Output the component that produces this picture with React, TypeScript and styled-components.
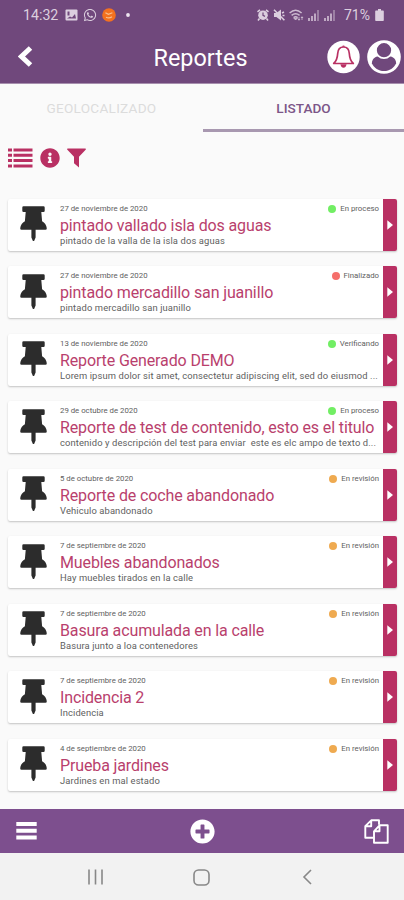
import React from "react";
import styled, { createGlobalStyle } from "styled-components";
import { FaInfoCircle, FaPlusCircle, FaWhatsapp } from "react-icons/fa";

const Global = createGlobalStyle`
  * { box-sizing: border-box; }
  body { margin: 0; background: #fafafa; font-family: Roboto, sans-serif; }
  svg { display: block; flex: none; }
`;

const Screen = styled.div`
  width: 404px;
  height: 900px;
  display: flex;
  flex-direction: column;
  overflow: hidden;
  background: #fafafa;
`;

const Header = styled.header`
  height: 84px;
  flex: none;
  background: #70487c;
  border-bottom: 1px solid #a78fae;
  color: #fff;
`;

const StatusBar = styled.div`
  height: 30px;
  display: flex;
  align-items: center;
  justify-content: space-between;
  padding: 0 20px 0 23px;
  font-size: 13px;
  color: #dccfdf;
`;

const StatusGroup = styled.div<{ $gap: number }>`
  display: flex;
  align-items: center;
  gap: ${(p) => p.$gap}px;
`;

const Clock = styled.span`
  width: 36px;
  font-size: 14.2px;
  margin-right: 1px;
`;

const Percent = styled.span`
  font-size: 14px;
  margin-left: 4px;
  width: 27px;
`;

const TitleBar = styled.div`
  height: 53px;
  display: grid;
  grid-template-columns: 80px 1fr 80px;
  align-items: center;
  padding: 0 3px 0 18px;
`;

const Title = styled.h1`
  margin: 0;
  padding-top: 3px;
  padding-right: 18px;
  text-align: center;
  font-size: 23.4px;
  line-height: 28px;
  font-weight: 400;
  white-space: nowrap;
`;

const Actions = styled.div`
  display: flex;
  justify-content: flex-end;
  gap: 7px;
`;

const Tabs = styled.nav`
  height: 48px;
  flex: none;
  display: grid;
  grid-template-columns: 203px 201px;
`;

const Tab = styled.div<{ $active?: boolean }>`
  display: flex;
  align-items: center;
  justify-content: center;
  font-size: 13.6px;
  font-weight: ${(p) => (p.$active ? 500 : 400)};
  letter-spacing: ${(p) => (p.$active ? 0 : 0.25)}px;
  color: ${(p) => (p.$active ? "#7c5688" : "#dcdcdc")};
  border-bottom: 3px solid ${(p) => (p.$active ? "#a898b0" : "transparent")};
  padding-top: 3px;
`;

const Tools = styled.div`
  height: 66px;
  flex: none;
  display: flex;
  gap: 7px;
  padding: 16px 0 0 8px;
  color: #b93063;
`;

const List = styled.main`
  flex: 1;
  display: flex;
  flex-direction: column;
  gap: 15.5px;
  padding: 0.5px 7px 0 8px;
`;

const Card = styled.article`
  height: 52px;
  flex: none;
  display: grid;
  grid-template-columns: 52px 1fr 14px;
  background: #fff;
  border-radius: 2px;
  box-shadow: 0 1px 2px rgba(0, 0, 0, 0.22);
`;

const PinCell = styled.div`
  padding: 7.5px 0 0 12px;
  color: #2c2c2c;
`;

const CardBody = styled.div`
  min-width: 0;
  padding: 4px 4px 0 0;
  color: #606060;
`;

const Meta = styled.div`
  display: flex;
  justify-content: space-between;
  height: 12px;
  line-height: 12px;
  font-size: 7.8px;
  white-space: nowrap;
`;

const Status = styled.span`
  display: flex;
  align-items: center;
  gap: 4px;
`;

const Dot = styled.i<{ $color: string }>`
  width: 8px;
  height: 8px;
  border-radius: 50%;
  background: ${(p) => p.$color};
`;

const Name = styled.h2`
  margin: 0;
  height: 21px;
  line-height: 22px;
  font-size: 16px;
  letter-spacing: -0.13px;
  font-weight: 400;
  white-space: nowrap;
  color: #b93f6d;
`;

const Description = styled.p`
  margin: 0;
  height: 11px;
  line-height: 9px;
  font-size: 9.4px;
  letter-spacing: 0.12px;
  white-space: pre;
`;

const Open = styled.button`
  display: flex;
  align-items: center;
  justify-content: center;
  border: 0;
  padding: 0;
  background: #b93063;
  border-radius: 0 2px 2px 0;
`;

const BottomBar = styled.footer`
  height: 44px;
  flex: none;
  display: grid;
  grid-template-columns: 174px 25px 174px;
  align-items: center;
  padding: 0 15px 0 16px;
  background: #7d4f8e;
  color: #fff;

  & > :last-child {
    justify-self: end;
  }
`;

const SystemNav = styled.div`
  height: 47px;
  flex: none;
  display: flex;
  align-items: center;
  gap: 89px;
  padding: 1px 0 0 87px;
  background: #f2f2f2;

  & > :last-child {
    margin-left: 3px;
  }
`;

const green = "#72ee64";
const red = "#f56f6b";
const orange = "#efaa50";

type Report = {
  date: string;
  name: string;
  text: string;
  status: string;
  color: string;
};

const reports: Report[] = [
  { date: "27 de noviembre de 2020", name: "pintado vallado isla dos aguas", text: "pintado de la valla de la isla dos aguas", status: "En proceso", color: green },
  { date: "27 de noviembre de 2020", name: "pintado mercadillo san juanillo", text: "pintado mercadillo san juanillo", status: "Finalizado", color: red },
  { date: "13 de noviembre de 2020", name: "Reporte Generado DEMO", text: "Lorem ipsum dolor sit amet, consectetur adipiscing elit, sed do eiusmod ...", status: "Verificando", color: green },
  { date: "29 de octubre de 2020", name: "Reporte de test de contenido, esto es el titulo", text: "contenido y descripción del test para enviar  este es elc ampo de texto d...", status: "En proceso", color: green },
  { date: "5 de octubre de 2020", name: "Reporte de coche abandonado", text: "Vehiculo abandonado", status: "En revisión", color: orange },
  { date: "7 de septiembre de 2020", name: "Muebles abandonados", text: "Hay muebles tirados en la calle", status: "En revisión", color: orange },
  { date: "7 de septiembre de 2020", name: "Basura acumulada en la calle", text: "Basura junto a loa contenedores", status: "En revisión", color: orange },
  { date: "7 de septiembre de 2020", name: "Incidencia 2", text: "Incidencia", status: "En revisión", color: orange },
  { date: "4 de septiembre de 2020", name: "Prueba jardines", text: "Jardines en mal estado", status: "En revisión", color: orange },
];

const PictureIcon = () => (
  <svg width="13" height="12" viewBox="0 0 13 12">
    <rect x="0.5" y="0.5" width="12" height="11" rx="1" fill="#dccfdf" />
    <path d="M2.5 2.5h2v4h-2zM2 9.5l3-2 2 1 3-3.5 1 4.5z" fill="#70487c" />
  </svg>
);

const OrangeBadge = () => (
  <svg width="14" height="14" viewBox="0 0 14 14">
    <circle cx="7" cy="7" r="6.8" fill="#f4711f" />
    <path d="M3.4 4.8l3 1.6 4-1.6M4 9.2q3 1.6 6-.4" stroke="#f9bd8d" strokeWidth="1.2" fill="none" />
  </svg>
);

const AlarmIcon = () => (
  <svg width="12" height="12" viewBox="0 0 12 12">
    <path d="M0.5 2.8L3 .8M11.5 2.8L9 .8M2.5 9.5L1 11.5M9.5 9.5l1.5 2" stroke="#dccfdf" strokeWidth="1.6" />
    <circle cx="6" cy="6.2" r="4.8" fill="#dccfdf" />
    <path d="M6 3.4v3l2 1" stroke="#70487c" strokeWidth="1.2" fill="none" />
  </svg>
);

const MuteIcon = () => (
  <svg width="12" height="12" viewBox="0 0 12 12">
    <path d="M1 4h2.4L8 .5v11L3.4 8H1z" fill="#dccfdf" />
    <path d="M1 .8L11.4 11.2M9 4l2-1M9.500 6.500h2" stroke="#dccfdf" strokeWidth="1.6" />
  </svg>
);

const WifiIcon = () => (
  <svg width="15" height="12" viewBox="0 0 15 12">
    <path d="M.6 4q6-5.5 12 0M2.6 6.4q4-3.4 8 0M4.6 8.6q2-1.8 4 0" stroke="#cdbbd1" strokeWidth="1.5" fill="none" />
    <path d="M6.6 11L4.8 9.2h3.6zM10 8v3M9 10l1 1.3L11 10M13 11V8M12 9l1-1.3L14 9" fill="#cdbbd1" stroke="#cdbbd1" strokeWidth=".8" />
  </svg>
);

const SignalIcon = () => (
  <svg width="12" height="12" viewBox="0 0 12 12">
    <path d="M1 9v3M4 7v5M7 4.5V12" stroke="#cdbbd1" strokeWidth="1.7" />
    <path d="M10 1v11" stroke="#a58bac" strokeWidth="1.7" />
  </svg>
);

const BatteryIcon = () => (
  <svg width="9" height="12" viewBox="0 0 9 12">
    <path d="M3 0h3v1.4h2q.8 0 .8.8v9q0 .8-.8.8H1q-.8 0-.8-.8v-9q0-.8.8-.8h2z" fill="#dccfdf" />
  </svg>
);

const BackIcon = () => (
  <svg width="15" height="22" viewBox="0 0 15 22">
    <path d="M12.500 2L3.500 10.500l9 8.500" stroke="#fff" strokeWidth="5" fill="none" />
  </svg>
);

const BellIcon = () => (
  <svg width="33" height="34" viewBox="0 0 33 34">
    <circle cx="16.5" cy="17" r="16.2" fill="#fff" />
    <path
      d="M16.5 7c-4 0-5.6 3-5.8 6.5-.3 5-1 7.3-4 10h19.6c-3-2.700-3.700-5-4-10C22.1 10 20.5 7 16.5 7z"
      fill="none"
      stroke="#b93063"
      strokeWidth="1.7"
      strokeLinejoin="round"
    />
    <path d="M15.2 6.8a1.3 1.3 0 012.600 0zM13.4 24.3h6.200q-.8 3.500-3.100 3.500t-3.100-3.500z" fill="#b93063" />
  </svg>
);

const ProfileIcon = () => (
  <svg width="34" height="34" viewBox="0 0 34 34">
    <circle cx="17" cy="17" r="16.8" fill="#fff" />
    <path d="M11.5 16.300C7.500 17 4.900 19.600 4.900 23.200 7 28 11.500 31 17 31s10-3 12.100-7.800c0-3.600-2.600-6.200-6.600-6.900z" fill="#70487c" />
    <circle cx="17" cy="10.200" r="8" fill="#70487c" stroke="#fff" strokeWidth="1.700" />
  </svg>
);

const PinIcon = () => (
  <svg width="27" height="36" viewBox="0 0 27 36">
    <path
      d="M3.500.3h20q1.200 0 1.200 1.200v3.200q0 1.200-1.200 1.200h-2.200l.8 9.300c2.600 1.300 4.300 3.600 4.700 7.100q0 1.500-1.300 1.500H15.600v7.600l-1.500 3.600h-1.200l-1.500-3.600v-7.600H1.500Q.2 23.800.2 22.300c.4-3.500 2.100-5.800 4.700-7.100l.8-9.300H3.500q-1.200 0-1.200-1.200V1.500Q2.300.3 3.500.3z"
      fill="currentColor"
    />
  </svg>
);

const ListIcon = () => (
  <svg width="25" height="20" viewBox="0 0 25 20">
    <path d="M0 .500h4v3H0zM5.500.500H24.500v3h-19zM0 5.800h4v3H0zM5.500 5.800H24.500v3h-19zM0 11.100h4v3H0zM5.500 11.100H24.500v3h-19zM0 16.400h4v3H0zM5.500 16.400H24.500v3h-19z" fill="currentColor" />
  </svg>
);

const FilterIcon = () => (
  <svg width="19" height="20" viewBox="0 0 19 20">
    <path d="M.6.5h17.800q.9.700 0 1.600L12 8.700v10.800L7 15.300V8.700L.6 2.100Q-.3 1.200.6.500z" fill="currentColor" />
  </svg>
);

const ArrowIcon = () => (
  <svg width="6" height="10" viewBox="0 0 6 10">
    <path d="M.3.300L6 5 .3 9.700z" fill="#fff" />
  </svg>
);

const MenuIcon = () => (
  <svg width="21" height="18" viewBox="0 0 21 18">
    <path d="M.3 2h20.400M.3 8.800h20.400M.3 15.600h20.400" stroke="#fff" strokeWidth="4" />
  </svg>
);

const CopyIcon = () => (
  <svg width="25" height="25" viewBox="0 0 25 25">
    <g fill="none" stroke="#fff" strokeWidth="1.900" strokeLinejoin="round">
      <path d="M15 5.800V1.300H7.200L1.300 7.200v11.500h8M7.200 1.300v5.900H1.300" />
      <path d="M23.700 6.300h-8.200l-5.500 6v11.400h13.700zM15.500 6.300v6H10" />
    </g>
  </svg>
);

const RecentsIcon = () => (
  <svg width="17" height="16" viewBox="0 0 17 16">
    <path d="M2 .5v15M8.500.500v15M15 .5v15" stroke="#888" strokeWidth="1.600" />
  </svg>
);

const HomeIcon = () => (
  <svg width="17" height="17" viewBox="0 0 17 17">
    <rect x="1" y="1" width="15" height="15" rx="4.600" fill="none" stroke="#888" strokeWidth="1.600" />
  </svg>
);

const NavBackIcon = () => (
  <svg width="10" height="16" viewBox="0 0 10 16">
    <path d="M9 1L2 8l7 7" fill="none" stroke="#888" strokeWidth="1.600" />
  </svg>
);

const ReportCard = ({ report }: { report: Report }) => (
  <Card>
    <PinCell>
      <PinIcon />
    </PinCell>
    <CardBody>
      <Meta>
        <span>{report.date}</span>
        <Status>
          <Dot $color={report.color} />
          {report.status}
        </Status>
      </Meta>
      <Name>{report.name}</Name>
      <Description>{report.text}</Description>
    </CardBody>
    <Open aria-label="Abrir">
      <ArrowIcon />
    </Open>
  </Card>
);

export default function App() {
  return (
    <>
      <Global />
      <Screen>
        <Header>
          <StatusBar>
            <StatusGroup $gap={5}>
              <Clock>14:32</Clock>
              <PictureIcon />
              <FaWhatsapp size={14} />
              <OrangeBadge />
              <svg width="14" height="4" viewBox="0 0 14 4">
                <circle cx="7" cy="2" r="1.900" fill="#eee5f0" />
              </svg>
            </StatusGroup>
            <StatusGroup $gap={4}>
              <AlarmIcon />
              <MuteIcon />
              <WifiIcon />
              <SignalIcon />
              <SignalIcon />
              <Percent>71%</Percent>
              <BatteryIcon />
            </StatusGroup>
          </StatusBar>
          <TitleBar>
            <BackIcon />
            <Title>Reportes</Title>
            <Actions>
              <BellIcon />
              <ProfileIcon />
            </Actions>
          </TitleBar>
        </Header>
        <Tabs>
          <Tab>GEOLOCALIZADO</Tab>
          <Tab $active>LISTADO</Tab>
        </Tabs>
        <Tools>
          <ListIcon />
          <FaInfoCircle size={20} />
          <FilterIcon />
        </Tools>
        <List>
          {reports.map((r) => (
            <ReportCard key={r.name} report={r} />
          ))}
        </List>
        <BottomBar>
          <MenuIcon />
          <FaPlusCircle size={25} />
          <CopyIcon />
        </BottomBar>
        <SystemNav>
          <RecentsIcon />
          <HomeIcon />
          <NavBackIcon />
        </SystemNav>
      </Screen>
    </>
  );
}
